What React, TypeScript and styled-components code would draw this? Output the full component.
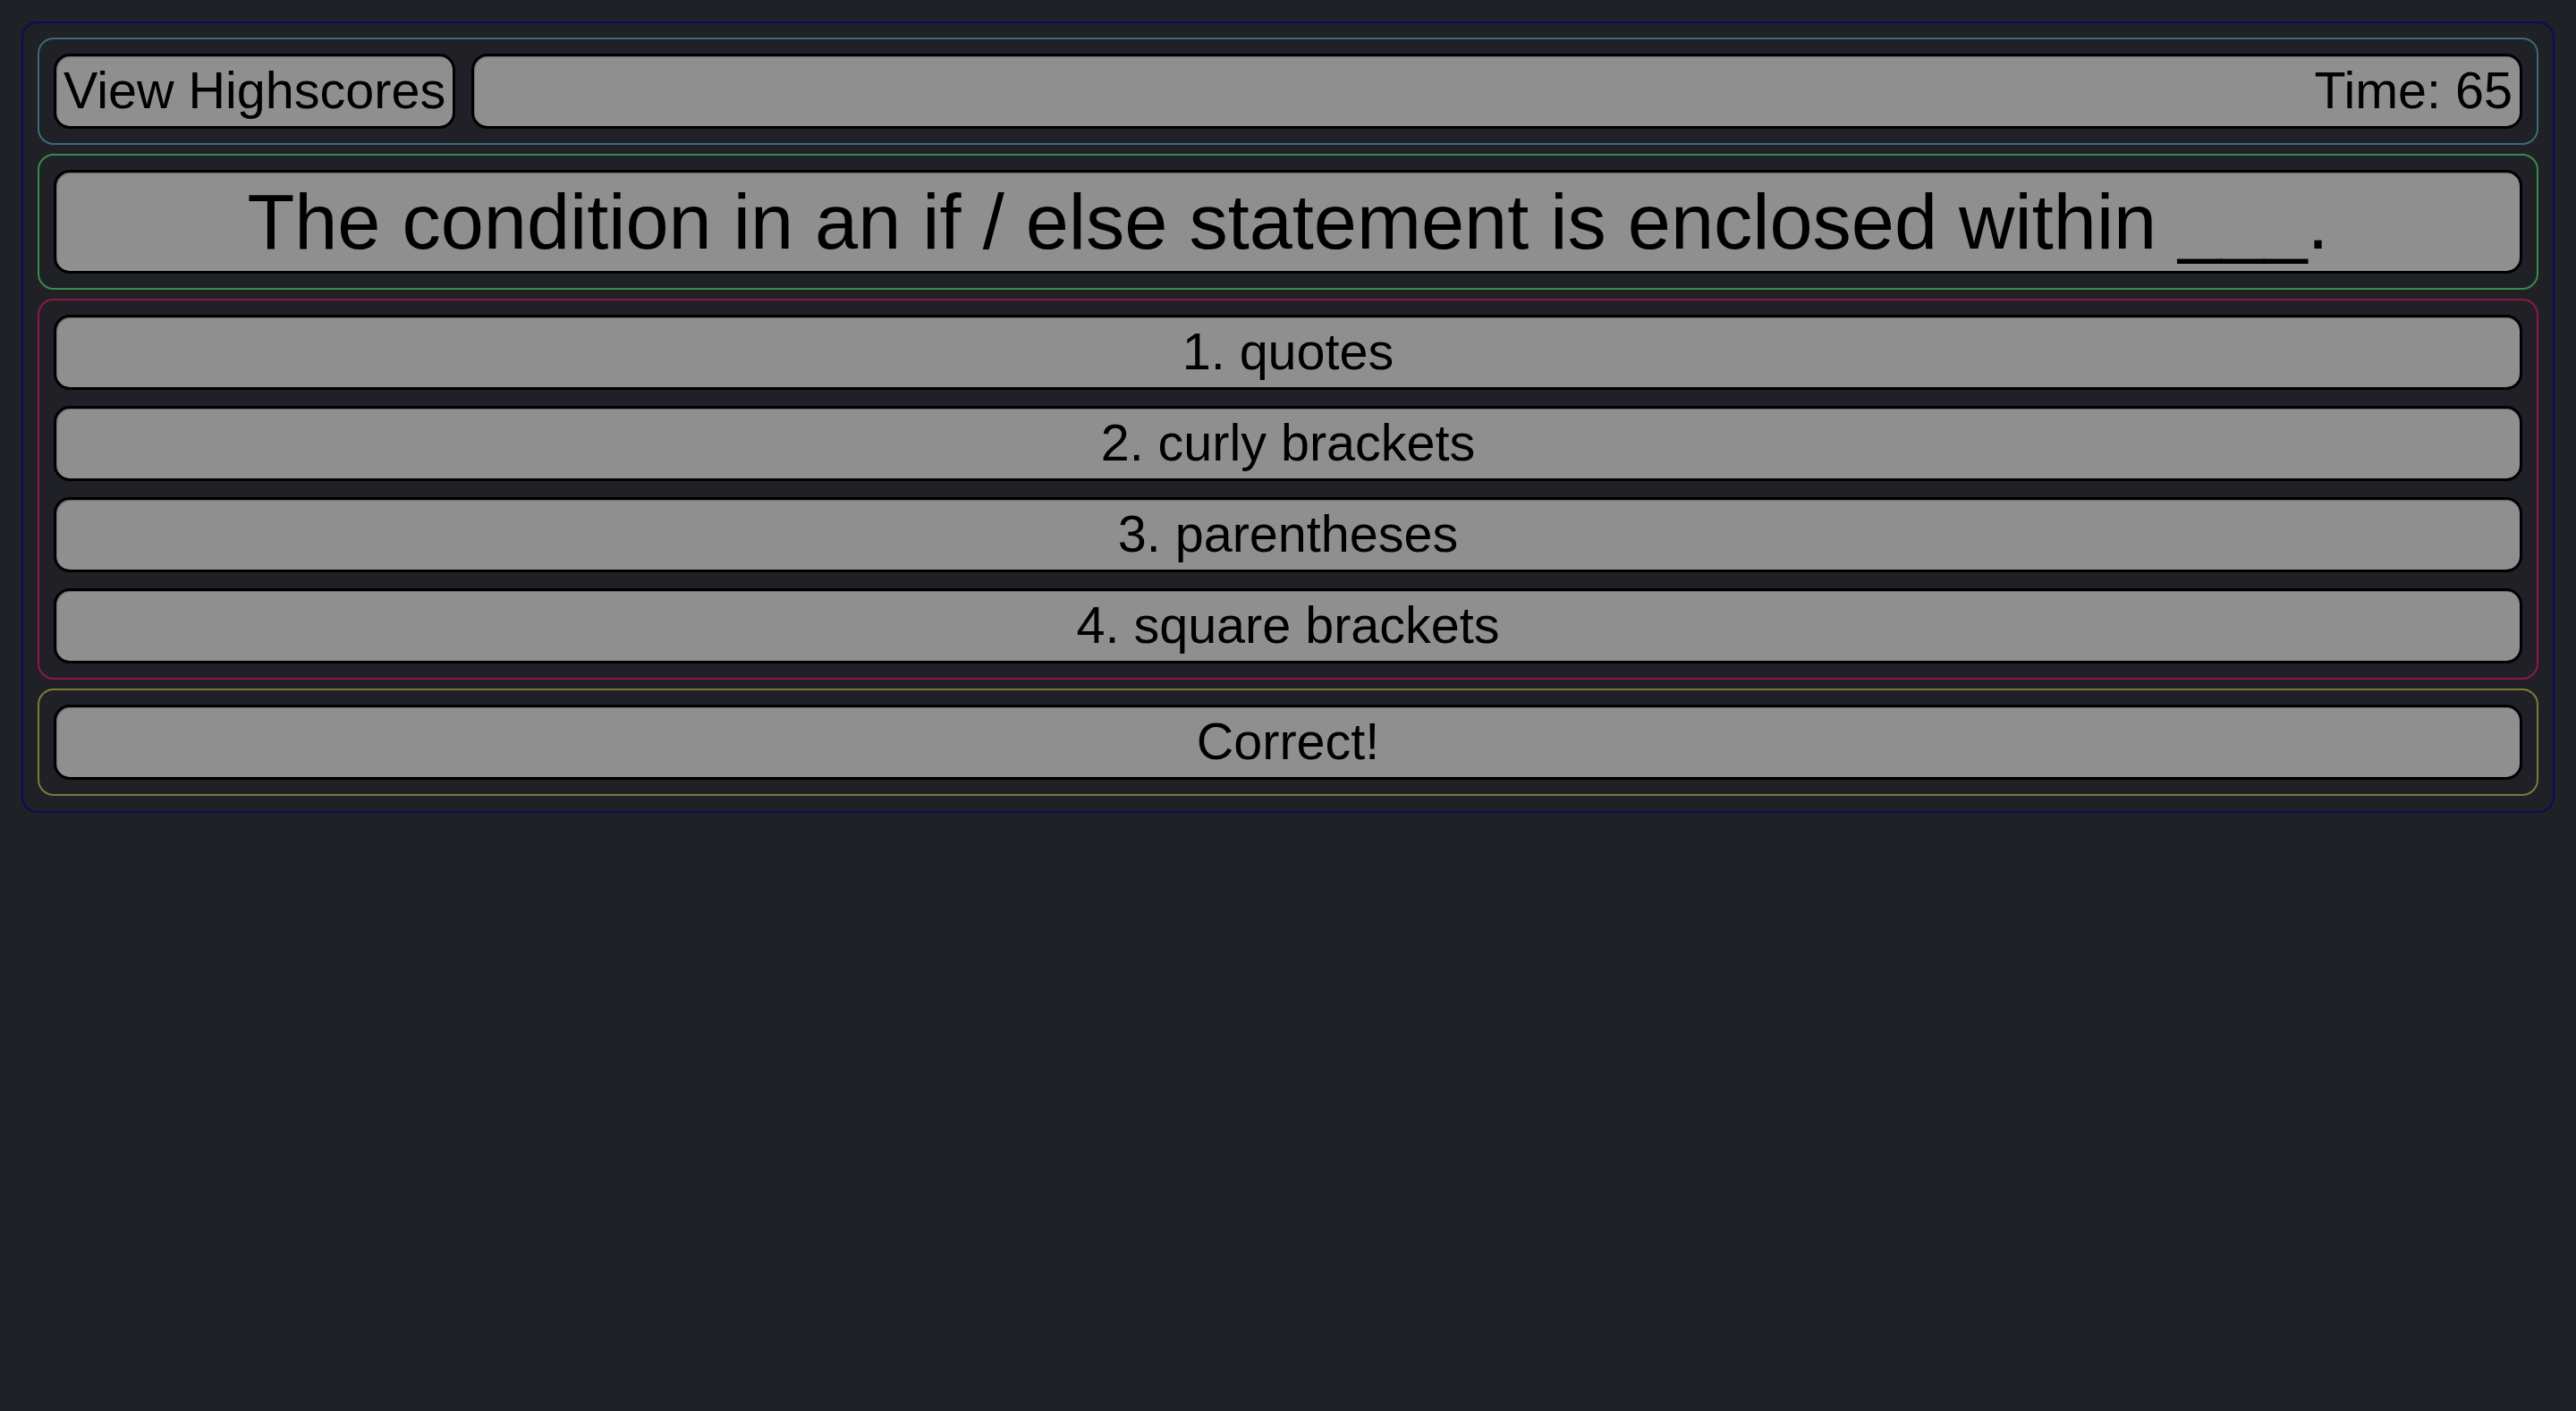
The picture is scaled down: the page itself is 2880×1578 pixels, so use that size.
import React from "react";
import styled, { createGlobalStyle } from "styled-components";

const GlobalStyle = createGlobalStyle`
  html, body {
    margin: 0;
    padding: 0;
    background: #202126;
  }
  body {
    font-family: "Liberation Sans", Arial, Helvetica, sans-serif;
    color: #000;
  }
  * { box-sizing: border-box; }
`;

const Page = styled.div`
  padding: 24px;
`;

const Frame = styled.main`
  display: flex;
  flex-direction: column;
  gap: 10px;
  border: 2px solid #0b0b58;
  border-radius: 18px;
  padding: 16px 16px 17px;
`;

const Section = styled.section<{ $color: string }>`
  display: flex;
  flex-direction: column;
  gap: 18px;
  border: 2px solid ${(p) => p.$color};
  border-radius: 18px;
  padding: 16px;
`;

const HeaderRow = styled.div`
  display: flex;
  gap: 18px;
`;

const Box = styled.div<{ $align?: "left" | "center" | "right"; $grow?: boolean; $tall?: boolean }>`
  display: flex;
  align-items: center;
  justify-content: ${(p) =>
    p.$align === "right" ? "flex-end" : p.$align === "left" ? "flex-start" : "center"};
  flex: ${(p) => (p.$grow ? "1 1 auto" : "0 0 auto")};
  height: ${(p) => (p.$tall ? "116px" : "84px")};
  padding: 0 8px;
  background: #8f8f90;
  border: 3px solid #000;
  border-radius: 18px;
  font-size: ${(p) => (p.$tall ? "86.5px" : "57.5px")};
  line-height: 1;
  white-space: nowrap;
  box-shadow: inset 1px 1px 1px rgba(0, 0, 0, 0.25);
`;

const answers = ["1. quotes", "2. curly brackets", "3. parentheses", "4. square brackets"];

export default function App() {
  return (
    <>
      <GlobalStyle />
      <Page>
        <Frame>
          <Section $color="#3b6a7b">
            <HeaderRow>
              <Box $align="left">View Highscores</Box>
              <Box $align="right" $grow>
                Time: 65
              </Box>
            </HeaderRow>
          </Section>
          <Section $color="#3a8a4a">
            <Box $tall>The condition in an if / else statement is enclosed within ___.</Box>
          </Section>
          <Section $color="#8a1a48">
            {answers.map((a) => (
              <Box key={a}>{a}</Box>
            ))}
          </Section>
          <Section $color="#7d7a3c">
            <Box>Correct!</Box>
          </Section>
        </Frame>
      </Page>
    </>
  );
}
